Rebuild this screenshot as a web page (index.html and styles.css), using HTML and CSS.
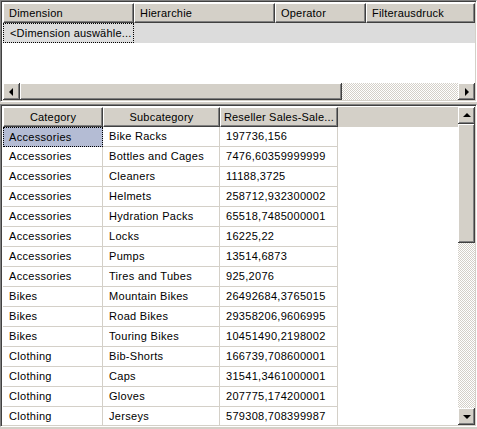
FILE: index.html
```html
<!DOCTYPE html>
<html lang="de">
<head>
    <meta charset="UTF-8">
    <title>Filter und Daten</title>
    <link rel="stylesheet" href="styles.css">
</head>
<body>

    <div class="window">

        <!-- Filterbereich -->
        <div class="panel filter-panel">
            <div class="head-row">
                <div class="hcell c-dim">Dimension</div>
                <div class="hcell c-hier">Hierarchie</div>
                <div class="hcell c-op">Operator</div>
                <div class="hcell c-expr">Filterausdruck</div>
            </div>
            <div class="filter-row">
                <div class="fcell c-dim focus">&lt;Dimension auswähle...</div>
            </div>
            <div class="blank"></div>
            <div class="hscroll">
                <div class="sbtn"><span class="arrow left"></span></div>
                <div class="hthumb"></div>
                <div class="track"></div>
                <div class="sbtn"><span class="arrow right"></span></div>
            </div>
        </div>

        <!-- Ergebnisraster -->
        <div class="panel grid-panel">
            <div class="grid-area">
                <div class="head-row">
                    <div class="hcell center c-cat">Category</div>
                    <div class="hcell center c-sub">Subcategory</div>
                    <div class="hcell center c-val">Reseller Sales-Sale...</div>
                </div>
                <div class="rows" id="rows"></div>
            </div>
            <div class="vscroll">
                <div class="sbtn"><span class="arrow up"></span></div>
                <div class="vthumb"></div>
                <div class="track"></div>
                <div class="sbtn"><span class="arrow down"></span></div>
            </div>
        </div>

    </div>

    <script>
        // Daten aus dem Abfrageergebnis
        const data = [
            ['Accessories', 'Bike Racks', '197736,156'],
            ['Accessories', 'Bottles and Cages', '7476,60359999999'],
            ['Accessories', 'Cleaners', '11188,3725'],
            ['Accessories', 'Helmets', '258712,932300002'],
            ['Accessories', 'Hydration Packs', '65518,7485000001'],
            ['Accessories', 'Locks', '16225,22'],
            ['Accessories', 'Pumps', '13514,6873'],
            ['Accessories', 'Tires and Tubes', '925,2076'],
            ['Bikes', 'Mountain Bikes', '26492684,3765015'],
            ['Bikes', 'Road Bikes', '29358206,9606995'],
            ['Bikes', 'Touring Bikes', '10451490,2198002'],
            ['Clothing', 'Bib-Shorts', '166739,708600001'],
            ['Clothing', 'Caps', '31541,3461000001'],
            ['Clothing', 'Gloves', '207775,174200001'],
            ['Clothing', 'Jerseys', '579308,708399987']
        ];

        const rows = document.getElementById('rows');
        const cls = ['c-cat', 'c-sub', 'c-val'];

        data.forEach((r, i) => {
            const row = document.createElement('div');
            row.className = 'row';
            r.forEach((text, j) => {
                const cell = document.createElement('div');
                cell.className = 'cell ' + cls[j];
                if (i === 0 && j === 0) cell.classList.add('selected');
                cell.textContent = text;
                row.appendChild(cell);
            });
            rows.appendChild(row);
        });
    </script>

</body>
</html>
```

FILE: styles.css
```css
* {
    margin: 0;
    padding: 0;
    box-sizing: border-box;
}

body {
    font-family: 'Liberation Sans', Arial, sans-serif;
    font-size: 11px;
    color: #000;
    background: #d4d0c8;
}

.window {
    width: 477px;
    height: 429px;
    display: flex;
    flex-direction: column;
    gap: 2px;
}

/* eingelassener Rahmen */
.panel {
    border-top: 1px solid #808080;
    border-left: 1px solid #808080;
    border-right: 1px solid #fff;
    border-bottom: 1px solid #fff;
    box-shadow: inset 1px 1px 0 #404040, inset -1px -1px 0 #d4d0c8;
    padding: 2px 1px 1px 2px;
    background: #fff;
}

.filter-panel {
    height: 102px;
    display: flex;
    flex-direction: column;
}

.grid-panel {
    height: 323px;
    display: flex;
}

.head-row {
    display: flex;
    height: 20px;
    flex-shrink: 0;
    background: #d4d0c8;
}

.hcell {
    height: 20px;
    line-height: 18px;
    padding-left: 5px;
    white-space: nowrap;
    overflow: hidden;
    background: #d4d0c8;
    border-top: 1px solid #fff;
    border-left: 1px solid #fff;
    border-right: 1px solid #404040;
    border-bottom: 1px solid #404040;
    box-shadow: inset -1px -1px 0 #808080;
    letter-spacing: 0.2px;
}

.hcell.center {
    text-align: center;
    padding-left: 0;
}

.c-dim { width: 131px; }
.c-hier { width: 141px; }
.c-op { width: 91px; }
.c-expr { flex: 1; }

.c-cat { width: 100px; }
.c-sub { width: 117px; }
.c-val { width: 118px; }

.filter-row {
    display: flex;
    height: 20px;
    background: #dcdcdc;
}

.fcell {
    line-height: 18px;
    padding-left: 6px;
    white-space: nowrap;
    letter-spacing: 0.2px;
}

.focus {
    border: 1px dotted #000;
}

.blank {
    flex: 1;
}

/* Bildlaufleisten */
.hscroll {
    height: 17px;
    display: flex;
    flex-shrink: 0;
}

.vscroll {
    width: 17px;
    display: flex;
    flex-direction: column;
    flex-shrink: 0;
}

.sbtn,
.hthumb,
.vthumb {
    background: #d4d0c8;
    box-shadow: inset -1px -1px 0 #404040, inset 1px 1px 0 #fff, inset -2px -2px 0 #808080;
    display: flex;
    align-items: center;
    justify-content: center;
}

.sbtn {
    width: 17px;
    height: 17px;
    flex-shrink: 0;
}

.hthumb {
    width: 322px;
}

.vthumb {
    height: 119px;
}

.track {
    flex: 1;
    background-color: #fff;
    background-image: repeating-conic-gradient(#d4d0c8 0 25%, #fff 0 50%);
    background-size: 2px 2px;
}

.arrow {
    width: 0;
    height: 0;
    border: 4px solid transparent;
}

.arrow.left {
    border-right-color: #000;
    border-left-width: 0;
    margin-right: 1px;
}

.arrow.right {
    border-left-color: #000;
    border-right-width: 0;
    margin-left: 1px;
}

.arrow.up {
    border-bottom-color: #000;
    border-top-width: 0;
    margin-bottom: 1px;
}

.arrow.down {
    border-top-color: #000;
    border-bottom-width: 0;
    margin-top: 1px;
}

/* Datenraster */
.grid-area {
    flex: 1;
    display: flex;
    flex-direction: column;
    overflow: hidden;
}

.row {
    display: flex;
    height: 20px;
    flex-shrink: 0;
}

.cell {
    height: 20px;
    line-height: 19px;
    padding-left: 6px;
    white-space: nowrap;
    letter-spacing: 0.3px;
    border-right: 1px solid #d4d0c8;
    border-bottom: 1px solid #d4d0c8;
}

.cell.selected {
    background: #b4bcd4;
    border: 1px dotted #000;
    padding-left: 5px;
    line-height: 18px;
}
```
